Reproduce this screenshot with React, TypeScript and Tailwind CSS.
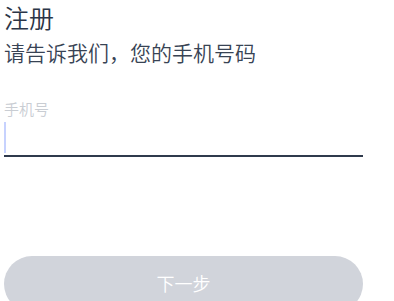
export default function App() {
  return (
    <div className="h-[301px] w-[394px] overflow-hidden bg-white font-['Noto_Sans_CJK_SC',sans-serif] font-[350]">
      <div className="ml-[4px] w-[359px]">
        <h1 className="pt-[2px] text-[25px] leading-[30px] font-[350] text-[#2b3547]">注册</h1>
        <p className="mt-[6px] text-[21px] leading-[28px] text-[#384354]">请告诉我们，您的手机号码</p>

        <label className="mt-[33px] block text-[15px] leading-[20px] text-[#c9cdd3]">手机号</label>
        <div className="mt-[1px] flex h-[37px] items-start border-b-2 border-[#2f3a4c] pt-[2px]">
          <span className="block h-[31px] w-[2px] bg-[#c7d2fe]" />
        </div>

        <button className="mt-[99px] flex h-[56px] w-full items-start justify-center rounded-full bg-[#d1d4db] pt-[16px] text-[18px] leading-[22px] font-[350] text-white">
          下一步
        </button>
      </div>
    </div>
  );
}
